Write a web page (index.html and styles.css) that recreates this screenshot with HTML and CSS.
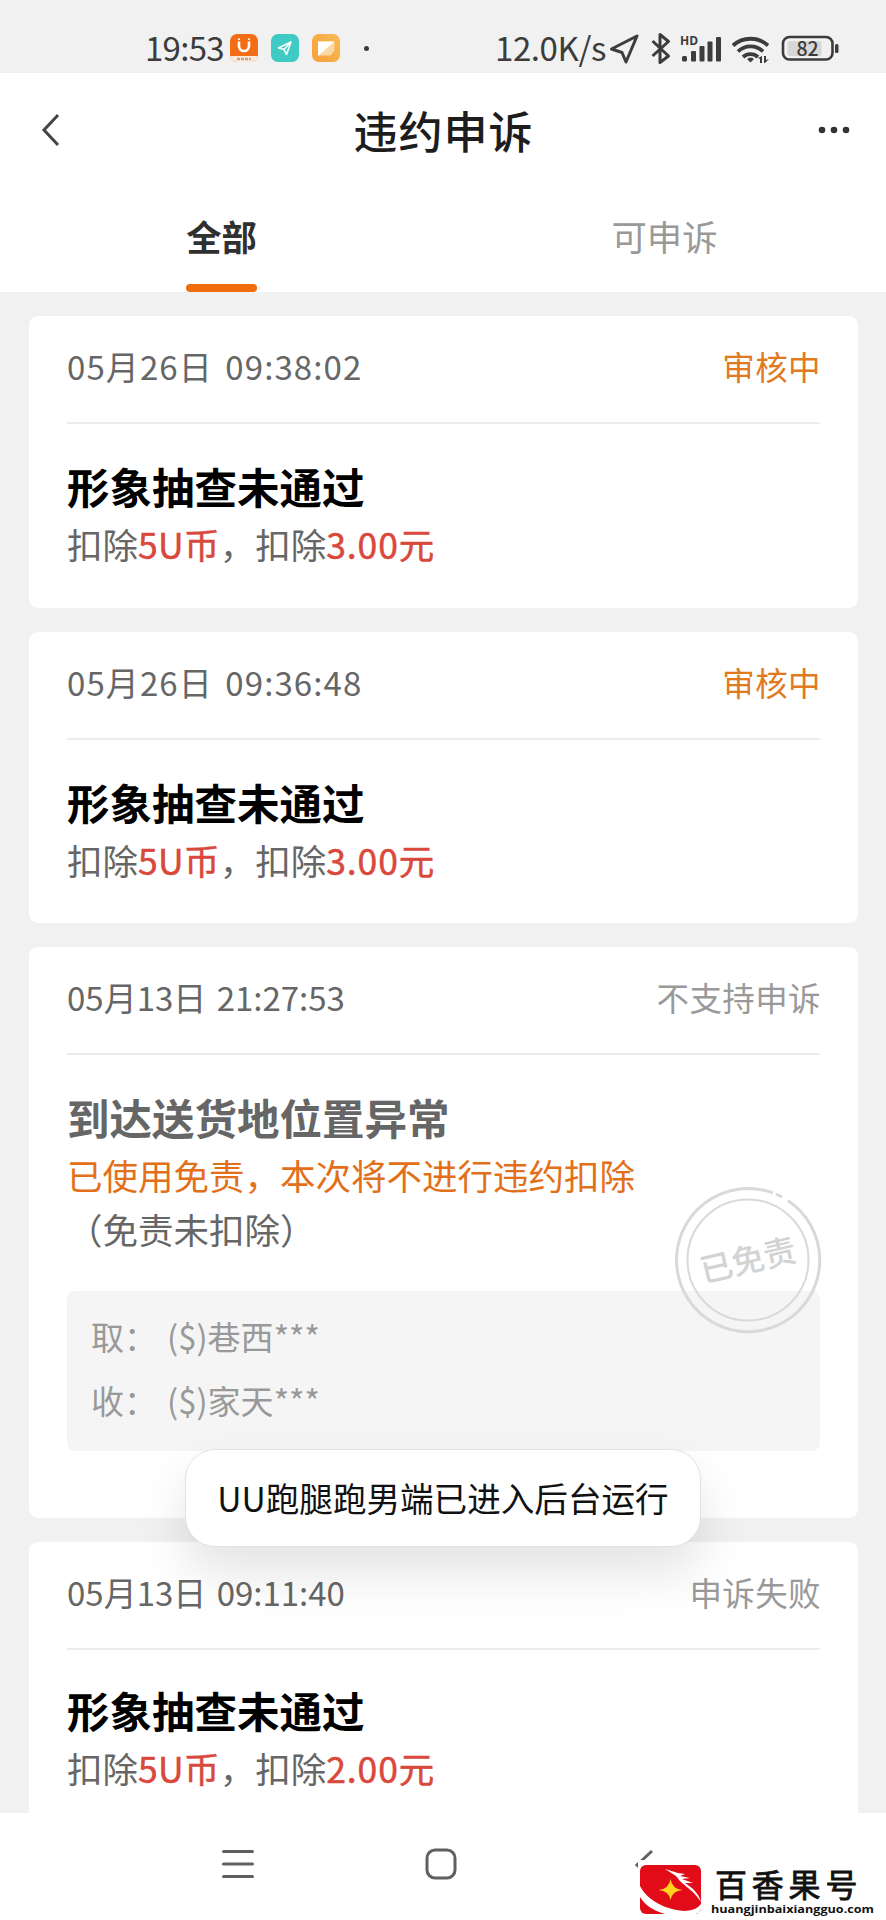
FILE: index.html
```html
<!DOCTYPE html>
<html lang="zh-CN">
<head>
<meta charset="utf-8">
<title>违约申诉</title>
<link rel="stylesheet" href="styles.css">
</head>
<body>
<div class="phone">
  <header class="status-bar">
    <span class="clock">19:53</span>
    <svg class="app-icon" viewBox="0 0 28 28"><defs><clipPath id="r"><rect width="28" height="28" rx="7"/></clipPath></defs><g clip-path="url(#r)"><rect width="28" height="28" fill="#f36c16"/><rect y="22" width="28" height="6" fill="#fbe9dc"/></g><path d="M9 7.500v4.500a5 5 0 0 0 10 0V7.500" fill="none" stroke="#fff" stroke-width="2.600"/><path d="M9 4.500v1.500M19 4.500v1.500" stroke="#fff" stroke-width="2"/><path d="M7 25h14" stroke="#c9a08a" stroke-width="2.500" stroke-dasharray="3 1"/></svg>
    <svg class="app-icon" viewBox="0 0 28 28"><rect width="28" height="28" rx="7" fill="#3fcac4"/><path d="M20 8L7.500 14l5.500 1.500L15.500 20.500z" fill="none" stroke="#fff" stroke-width="1.600" stroke-linejoin="round"/><path d="M13 15.500L20 8" stroke="#fff" stroke-width="1.500"/></svg>
    <svg class="app-icon" viewBox="0 0 28 28"><defs><linearGradient id="g" x1="0" y1="1" x2="1" y2="0"><stop stop-color="#f6a03a"/><stop offset="1" stop-color="#f7ba55"/></linearGradient></defs><rect width="28" height="28" rx="7" fill="url(#g)"/><path d="M6 7.500h16.500v9l-4 5H6z" fill="#fbd9a4"/><path d="M6 7.500h16.500L6 22z" fill="#fff"/></svg>
    <i class="more-dot"></i>
    <span class="speed">12.0K/s</span>
    <svg class="sys-icons" viewBox="608 30 232 36">
      <g fill="none" stroke="#3c3c3c" stroke-width="3" stroke-linejoin="round">
        <path d="M636 36L610.500 49l10.500 3.500L625 62z"/>
        <path d="M651.500 41L667.500 56 659 62.500V34.500L667.500 41.500 651.500 56"/>
        <path d="M732 45.500a26 26 0 0 1 35 0M737 51.500a18 18 0 0 1 25 0M742 57a11 11 0 0 1 15 0" stroke-width="3.800" stroke-linejoin="miter"/>
        <rect x="782" y="37" width="49.500" height="22.500" rx="6.500" stroke-width="2.600"/>
      </g>
      <g fill="#3c3c3c">
        <rect x="681" y="56" width="5" height="5.500" rx="1.500"/><rect x="690" y="51" width="5" height="10.500" rx="1"/><rect x="698.500" y="46" width="5" height="15.500" rx="1"/><rect x="706.500" y="41.500" width="5" height="20" rx="1"/><rect x="715" y="37" width="5" height="24.500" rx="1"/>
        <path d="M746 59q4-3 7 0l-3.500 3.500z"/>
        <path d="M757 58l4-2v7h-2v-4zM763 56h2v4l3-1-4 4h-1z"/>
        <rect x="834" y="44" width="3.500" height="9" rx="1.500"/>
      </g>
      <rect x="786.500" y="41" width="34" height="15" rx="2" fill="#d7d7d7"/>
      <text class="hd" x="679" y="45">HD</text>
      <text class="battery" x="795.500" y="55.500">82</text>
    </svg>
  </header>
  <nav class="title-bar">
    <svg class="back" viewBox="0 0 20 34"><path d="M17 2L3 17l14 15" fill="none" stroke="#444" stroke-width="3"/></svg>
    <h1>违约申诉</h1>
    <svg class="dots" viewBox="0 0 32 8" fill="#333"><circle cx="4" cy="4" r="3.300"/><circle cx="16" cy="4" r="3.300"/><circle cx="28" cy="4" r="3.300"/></svg>
  </nav>
  <div class="tabs">
    <div class="tab active"><span>全部</span></div>
    <div class="tab"><span>可申诉</span></div>
  </div>
  <main class="list">
    <article class="card">
      <div class="card-head"><time>05月26日 09:38:02</time><span class="state pending">审核中</span></div>
      <h2>形象抽查未通过</h2>
      <p>扣除<b>5U币</b>，扣除<b class="money">3.00元</b></p>
    </article>
    <article class="card">
      <div class="card-head"><time>05月26日 09:36:48</time><span class="state pending">审核中</span></div>
      <h2>形象抽查未通过</h2>
      <p>扣除<b>5U币</b>，扣除<b class="money">3.00元</b></p>
    </article>
    <article class="card exempt">
      <div class="card-head"><time class="tight">05月13日 21:27:53</time><span class="state">不支持申诉</span></div>
      <h2>到达送货地位置异常</h2>
      <p class="notice">已使用免责，本次将不进行违约扣除</p>
      <p class="reason">（免责未扣除）</p>
      <div class="route">
        <div><span class="label">取：</span><span>($)巷西<i>***</i></span></div>
        <div><span class="label">收：</span><span>($)家天<i>***</i></span></div>
      </div>
      <svg class="stamp" viewBox="-74 -74 148 148">
        <g fill="none" stroke="#d9d9d9"><path d="M39.900 -59.500A71.600 71.600 0 1 1 25 -67.100" stroke-width="3"/><path d="M28 -66l6 3" stroke-width="3"/><circle r="60.500" stroke-width="2"/></g>
        <text transform="rotate(-13)" y="12" text-anchor="middle">已免责</text>
      </svg>
    </article>
    <article class="card last">
      <div class="card-head"><time class="tight">05月13日 09:11:40</time><span class="state">申诉失败</span></div>
      <h2>形象抽查未通过</h2>
      <p>扣除<b>5U币</b>，扣除<b class="money">2.00元</b></p>
    </article>
  </main>
  <footer class="nav-bar">
    <svg viewBox="0 0 32 32"><path d="M1.500 3.500h29M1.500 16h29M1.500 28.500h29" stroke="#606060" stroke-width="3" stroke-linecap="round"/></svg>
    <svg viewBox="0 0 32 32"><rect x="2" y="2" width="28" height="28" rx="8" fill="none" stroke="#606060" stroke-width="3"/></svg>
    <svg viewBox="0 0 32 32"><path d="M24 3L9 17l15 14" fill="none" stroke="#606060" stroke-width="3"/></svg>
  </footer>
  <div class="toast">UU跑腿跑男端已进入后台运行</div>
  <div class="watermark">
    <svg class="mark" viewBox="640 1865 61 49">
      <clipPath id="logo"><rect x="640" y="1865" width="61" height="49" rx="6"/></clipPath>
      <g clip-path="url(#logo)">
        <rect x="640" y="1865" width="61" height="49" fill="#e20b18"/>
        <path d="M640 1886C647 1900 664 1909 684 1911Q696 1911 701 1904V1914H665C652 1910 644 1904 640 1897z" fill="#fff"/>
        <path d="M665 1869l13 4 7 1-5 2 10 2-8 1 11 4-8 0C693 1888 699 1894 701 1902C694 1891 686 1887 680 1881L676 1876z" fill="#fff"/>
        <path d="M670.500 1879q1.500 10 12 11-10.500 1-12 10-1.500-9-12-10 10.500-1 12-11z" fill="#ffd21c"/>
      </g>
    </svg>
    <div class="names">
      <span class="brand">百香果号</span>
      <svg class="site" viewBox="0 0 168 16"><text x="2" y="11" textLength="163" lengthAdjust="spacingAndGlyphs">huangjinbaixiangguo.com</text></svg>
    </div>
  </div>
</div>
</body>
</html>
```

FILE: styles.css
```css
* { box-sizing: border-box; }
body, h1, h2, p { margin: 0; }
body { font-family: "Noto Sans CJK SC", sans-serif; background: #f1f1f1; }
i { font-style: normal; }
.phone { position: relative; display: flex; flex-direction: column; width: 886px; height: 1920px; overflow: hidden; }

.status-bar { flex: none; height: 73px; display: flex; align-items: center; padding: 23px 45px 0 145px; color: #3c3c3c; }
.clock, .speed { font-size: 33px; line-height: 46px; margin-top: -2px; white-space: nowrap; }
.clock { width: 85px; letter-spacing: -0.700px; }
.app-icon { flex: none; width: 28px; height: 28px; margin-right: 13px; }
.more-dot { width: 5px; height: 5px; border-radius: 50%; background: #3c3c3c; margin-left: 11px; }
.speed { width: 114px; margin-left: auto; letter-spacing: -0.400px; }
.sys-icons { flex: none; width: 232px; height: 36px; margin-top: -1px; }
.hd { font: 700 12px "Open Sans", sans-serif; fill: #3c3c3c; }
.battery { font: 500 19.500px "Noto Sans CJK SC", sans-serif; fill: #3c3c3c; }

.title-bar { flex: none; height: 117px; display: flex; align-items: center; justify-content: space-between; padding: 0 36px 3px 41px; background: #fff; }
.back { width: 20px; height: 34px; }
.dots { width: 32px; height: 8px; }
h1 { position: relative; left: 4px; font-size: 44px; line-height: 60px; font-weight: 500; letter-spacing: 1px; color: #1d1d1d; }

.tabs { flex: none; height: 102px; display: flex; background: #fff; }
.tab { flex: 1; display: flex; justify-content: center; font-size: 35.300px; line-height: 92px; color: #999; }
.tab.active { color: #303030; font-weight: 600; }
.tab span { height: 102px; }
.tab.active span::after { content: ""; display: block; height: 8px; margin-top: 2px; border-radius: 4px; background: #ef6c0f; }

.list { flex: 1; min-height: 0; overflow: hidden; display: flex; flex-direction: column; gap: 24px; padding: 24px 28px 0 29px; }
.card { position: relative; flex: none; height: 291.500px; padding: 0 38px; border-radius: 9px; background: #fff; }
.card-head { height: 108px; display: flex; justify-content: space-between; padding-top: 26px; border-bottom: 2px solid #ececec; font-size: 33px; line-height: 48px; color: #666; }
time { letter-spacing: 1.100px; word-spacing: 4px; }
time.tight { letter-spacing: 0; word-spacing: 3px; }
.state { font-size: 32.500px; letter-spacing: 0.400px; margin-right: -1px; color: #999; }
.state.pending { color: #e17a1e; }
h2 { margin-top: 32px; font-size: 42.500px; line-height: 60px; font-weight: 700; color: #000; white-space: nowrap; }
.card p { font-size: 35.500px; line-height: 56px; color: #666; white-space: nowrap; }
.card b { font-weight: 400; color: #d9483c; -webkit-text-stroke: 0.500px #d9483c; }
.card b:first-child { letter-spacing: 0.300px; }
.card .money { letter-spacing: 0.900px; }

.exempt { height: 571px; }
.exempt h2 { color: #666; }
.card .notice { color: #e2701a; line-height: 55px; }
.card .reason { line-height: 53px; }
.route { height: 160px; margin-top: 36px; padding: 14px 24px; border-radius: 8px; background: #f5f5f5; color: #999; font-size: 33px; line-height: 63.500px; }
.route div { display: flex; }
.label { width: 76px; }
.stamp { position: absolute; left: 645px; top: 239px; width: 148px; height: 148px; }
.stamp text { font-size: 32.500px; font-weight: 500; fill: #d3d3d3; }
.last { height: 300px; }
.last h2 { margin-top: 30px; }

.nav-bar { flex: none; height: 107px; display: flex; gap: 171px; padding: 35px 0 0 222px; background: #fff; }
.nav-bar svg { width: 32px; height: 32px; }

.toast { position: absolute; left: 185px; top: 1449px; width: 516px; height: 98px; border: 1px solid #e2e2e2; border-radius: 30px; background: #fff; box-shadow: 0 26px 50px rgba(0,0,0,.11); font-size: 33.600px; line-height: 95px; text-align: center; color: #111; white-space: nowrap; }
.watermark { position: absolute; right: 0; bottom: 0; width: 248px; height: 60px; display: flex; padding: 5px 0 0 2px; background: #fff; }
.mark { width: 61px; height: 49px; }
.names { display: flex; flex-direction: column; margin-left: 8px; }
.brand { height: 37px; padding-left: 6px; font-size: 32px; line-height: 37px; letter-spacing: 4.800px; color: #111; -webkit-text-stroke: 0.800px #111; white-space: nowrap; }
.site { width: 168px; height: 16px; overflow: visible; }
.site text { font: 700 11px "Open Sans", sans-serif; fill: #111; }
```
